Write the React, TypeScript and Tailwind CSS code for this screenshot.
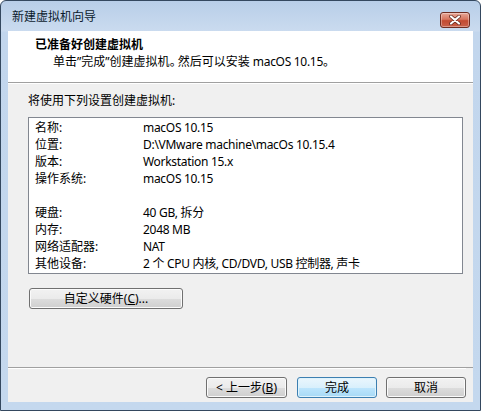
const rows: [string, string][] = [
  ["名称:", "macOS 10.15"],
  ["位置:", "D:\\VMware machine\\macOs 10.15.4"],
  ["版本:", "Workstation 15.x"],
  ["操作系统:", "macOS 10.15"],
];

const rows2: [string, string][] = [
  ["硬盘:", "40 GB, 拆分"],
  ["内存:", "2048 MB"],
  ["网络适配器:", "NAT"],
  ["其他设备:", "2 个 CPU 内核, CD/DVD, USB 控制器, 声卡"],
];

function CloseButton() {
  return (
    <div className="mt-[11px] flex h-[16px] w-[30px] items-center justify-center rounded-[3px] border border-[#6e2d22] bg-[linear-gradient(to_bottom,#e8a898_0%,#d7765f_45%,#c24a31_55%,#c9614a_100%)] shadow-[inset_0_0_0_1px_rgba(255,255,255,0.35)]">
      <svg width="14" height="10" viewBox="0 0 14 10">
        <path d="M3 1.5 L11 8.5 M11 1.5 L3 8.5" stroke="#5a2218" strokeWidth="3.6" strokeLinecap="round" />
        <path d="M3 1.5 L11 8.5 M11 1.5 L3 8.5" stroke="#ffffff" strokeWidth="2.2" strokeLinecap="round" />
      </svg>
    </div>
  );
}

function Button({ children, primary, className = "" }: { children: React.ReactNode; primary?: boolean; className?: string }) {
  return (
    <button
      className={
        "flex h-[21px] items-center justify-center rounded-[3px] border leading-none " +
        (primary
          ? "border-[#3c7fb1] bg-[linear-gradient(to_bottom,#eaf6fd_0%,#d9f0fc_50%,#bee6fd_50%,#a7d9f5_100%)] shadow-[inset_0_0_0_1px_#dff3fc] "
          : "border-[#707070] bg-[linear-gradient(to_bottom,#f2f2f2_0%,#ebebeb_50%,#dddddd_50%,#cfcfcf_100%)] shadow-[inset_0_0_0_1px_#fbfbfb] ") +
        className
      }
    >
      {children}
    </button>
  );
}

function Row({ k, v }: { k: string; v: string }) {
  return (
    <div className="grid grid-cols-[108px_1fr]">
      <span>{k}</span>
      <span className="tracking-[-0.3px]">{v}</span>
    </div>
  );
}

export default function App() {
  return (
    <div className="h-[416px] w-[482px] bg-white font-['Noto_Sans','Noto_Sans_CJK_SC',sans-serif] text-[12px] text-black">
      <div className="flex h-[411px] w-[481px] flex-col rounded-t-[6px] border border-[#34485f] bg-[linear-gradient(to_bottom,#b8cee8_0px,#cadbef_30px,#c2d6ed_31px,#c4d8ee_100%)]">
        {/* title bar */}
        <div className="flex h-[30px] shrink-0 items-start justify-between pl-[11px] pr-[10px]">
          <span className="mt-[8px] leading-[16px] text-[#0b1a2c]">新建虚拟机向导</span>
          <CloseButton />
        </div>

        {/* client area */}
        <div className="mx-[7px] mb-[8px] flex flex-1 flex-col bg-[#f0f0f0]">
          <div className="h-[52px] shrink-0 border-b border-[#a0a0a0] bg-white pl-[27px] pt-[5px] leading-[17px]">
            <div className="font-bold">已准备好创建虚拟机</div>
            <div className="pl-[18px]">
              单击”完成”创建虚拟机<span className="tracking-[-4px]">。</span>然后可以安装{" "}
              <span className="tracking-[-0.3px]">macOS 10.15</span>
              <span className="tracking-[-4px]">。</span>
            </div>
          </div>

          <div className="flex flex-1 flex-col border-t border-white pl-[20px] pr-[10px] pt-[8px]">
            <div className="leading-[17px]">将使用下列设置创建虚拟机:</div>
            <div className="mt-[8px] h-[157px] border border-[#828790] bg-white pl-[6px] pt-[1px] leading-[17px]">
              {rows.map(([k, v]) => (
                <Row key={k} k={k} v={v} />
              ))}
              <div className="h-[17px]" />
              {rows2.map(([k, v]) => (
                <Row key={k} k={k} v={v} />
              ))}
            </div>
            <Button className="ml-px mt-[14px] w-[154px]">
              自定义硬件(<span className="underline">C</span>)...
            </Button>
          </div>

          <div className="flex shrink-0 justify-end border-t border-[#a0a0a0] pb-[4px] pr-[7px]">
            <div className="flex w-full justify-end gap-[9px] border-t border-white pt-[8px]">
              <Button className="mr-px w-[81px]">
                &lt; 上一步(<span className="underline">B</span>)
              </Button>
              <Button primary className="w-[80px]">
                完成
              </Button>
              <Button className="w-[80px]">取消</Button>
            </div>
          </div>
        </div>
      </div>
    </div>
  );
}
